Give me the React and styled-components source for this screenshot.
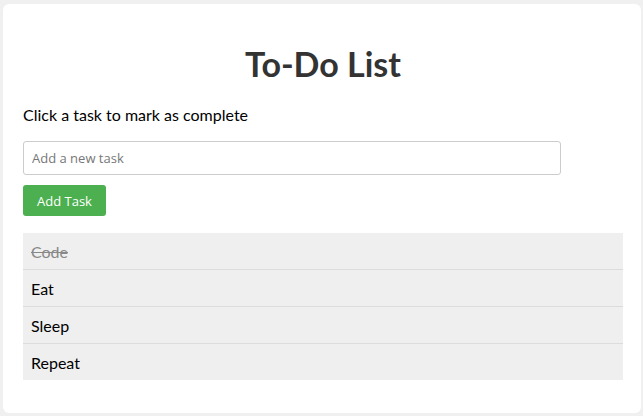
import React, { useState } from "react";
import styled, { createGlobalStyle } from "styled-components";

const GlobalStyle = createGlobalStyle`
  body {
    margin: 0;
    background: #f0f0f0;
    font-family: "Lato", "Noto Sans", sans-serif;
  }
`;

const Page = styled.div`
  padding: 4px 2px 3px 3px;
`;

const Card = styled.div`
  background: #fff;
  border-radius: 6px;
  padding: 20px 18px 33px 20px;
  min-height: 356px;
`;

const Title = styled.h1`
  margin: 21px 0 22px;
  text-align: center;
  font-size: 34px;
  font-weight: 700;
  color: #333;
  line-height: 38px;
`;

const Hint = styled.p`
  margin: 0 0 16px;
  font-size: 16px;
  line-height: 20px;
  color: #000;
`;

const Input = styled.input`
  display: block;
  box-sizing: border-box;
  width: 538px;
  height: 34px;
  padding: 0 8px;
  border: 1px solid #ccc;
  border-radius: 3px;
  font-family: "Open Sans", sans-serif;
  font-size: 13px;
  color: #333;
  outline: none;
  &::placeholder {
    color: #777;
  }
`;

const AddButton = styled.button`
  display: block;
  margin: 10px 0 17px;
  height: 31px;
  padding: 0 14px;
  border: none;
  border-radius: 3px;
  background: #4caf50;
  color: #fff;
  font-family: "Open Sans", sans-serif;
  font-size: 13px;
  cursor: pointer;
`;

const List = styled.ul`
  list-style: none;
  margin: 0;
  padding: 0;
`;

const Item = styled.li`
  height: 36px;
  display: flex;
  align-items: center;
  padding: 0 8px;
  background: #efefef;
  border-bottom: 1px solid #dcdcdc;
  font-size: 16px;
  color: ${(p) => (p.$done ? "#888" : "#000")};
  text-decoration: ${(p) => (p.$done ? "line-through" : "none")};
  cursor: pointer;
  &:last-child {
    border-bottom: none;
  }
`;

export default function App() {
  const [tasks, setTasks] = useState([
    { text: "Code", done: true },
    { text: "Eat", done: false },
    { text: "Sleep", done: false },
    { text: "Repeat", done: false },
  ]);
  const [value, setValue] = useState("");

  const add = () => {
    if (!value.trim()) return;
    setTasks([...tasks, { text: value.trim(), done: false }]);
    setValue("");
  };

  const toggle = (i) =>
    setTasks(tasks.map((t, j) => (j === i ? { ...t, done: !t.done } : t)));

  return (
    <Page>
      <GlobalStyle />
      <Card>
        <Title>To-Do List</Title>
        <Hint>Click a task to mark as complete</Hint>
        <Input
          placeholder="Add a new task"
          value={value}
          onChange={(e) => setValue(e.target.value)}
        />
        <AddButton onClick={add}>Add Task</AddButton>
        <List>
          {tasks.map((t, i) => (
            <Item key={i} $done={t.done} onClick={() => toggle(i)}>
              {t.text}
            </Item>
          ))}
        </List>
      </Card>
    </Page>
  );
}
